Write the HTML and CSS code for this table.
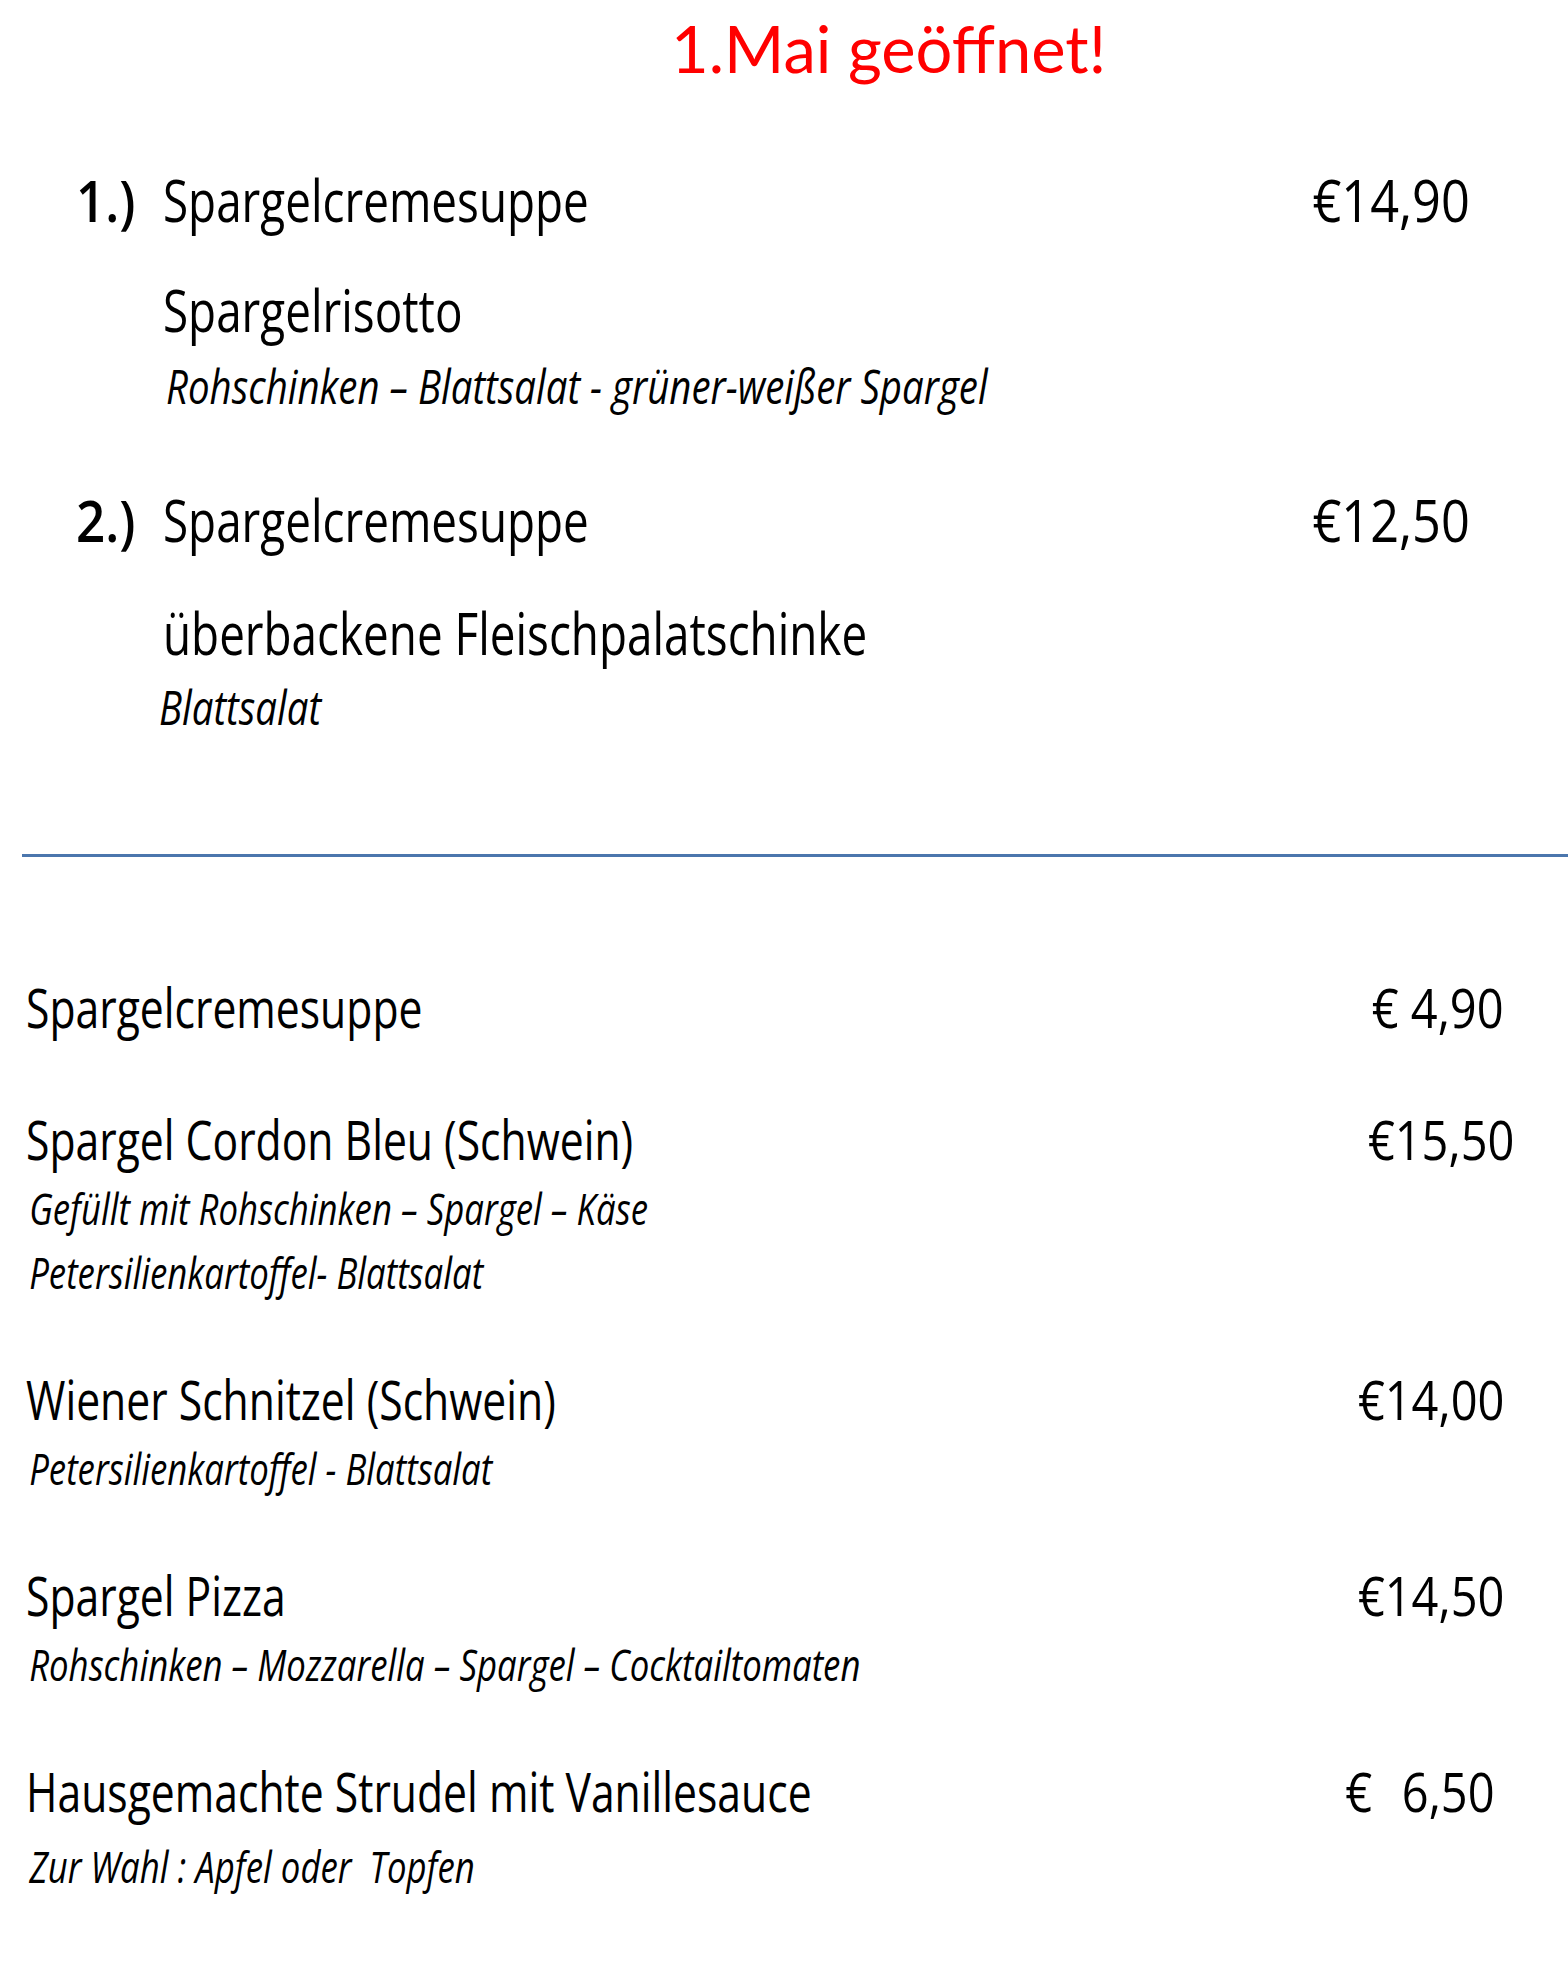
FILE: index.html
```html
<!DOCTYPE html>
<html lang="de">
<head>
    <meta charset="UTF-8">
    <meta name="viewport" content="width=device-width, initial-scale=1.0">
    <title>Spargelmenü</title>
    <link rel="stylesheet" href="styles.css">
</head>
<body>
    <div class="page">
        <h1 class="headline">1.Mai geöffnet!</h1>

        <section class="specials">
            <div class="combo">
                <div class="combo-row">
                    <span class="num">1.)</span>
                    <span class="name">Spargelcremesuppe</span>
                    <span class="price">€14,90</span>
                </div>
                <div class="sub">Spargelrisotto</div>
                <div class="sub-desc">Rohschinken – Blattsalat - grüner-weißer Spargel</div>
            </div>

            <div class="combo">
                <div class="combo-row">
                    <span class="num">2.)</span>
                    <span class="name">Spargelcremesuppe</span>
                    <span class="price">€12,50</span>
                </div>
                <div class="sub sub-wide">überbackene Fleischpalatschinke</div>
                <div class="sub-desc sub-desc-tight">Blattsalat</div>
            </div>
        </section>

        <hr class="divider">

        <section class="menu">
            <div class="dish">
                <div class="dish-row">
                    <span class="dish-name">Spargelcremesuppe</span>
                    <span class="dish-price">€ 4,90</span>
                </div>
            </div>

            <div class="dish">
                <div class="dish-row">
                    <span class="dish-name">Spargel Cordon Bleu (Schwein)</span>
                    <span class="dish-price price-out">€15,50</span>
                </div>
                <div class="desc">Gefüllt mit Rohschinken – Spargel – Käse</div>
                <div class="desc">Petersilienkartoffel- Blattsalat</div>
            </div>

            <div class="dish">
                <div class="dish-row">
                    <span class="dish-name">Wiener Schnitzel (Schwein)</span>
                    <span class="dish-price">€14,00</span>
                </div>
                <div class="desc">Petersilienkartoffel - Blattsalat</div>
            </div>

            <div class="dish">
                <div class="dish-row">
                    <span class="dish-name">Spargel Pizza</span>
                    <span class="dish-price">€14,50</span>
                </div>
                <div class="desc">Rohschinken – Mozzarella – Spargel – Cocktailtomaten</div>
            </div>

            <div class="dish">
                <div class="dish-row">
                    <span class="dish-name">Hausgemachte Strudel mit Vanillesauce</span>
                    <span class="dish-price price-in">€&nbsp;&nbsp;6,50</span>
                </div>
                <div class="desc desc-spaced">Zur Wahl : Apfel oder&nbsp; Topfen</div>
            </div>
        </section>
    </div>
</body>
</html>
```
FILE: styles.css
```css
* {
    margin: 0;
    padding: 0;
    box-sizing: border-box;
}
body {
    background: #ffffff;
    color: #000000;
    font-family: "Open Sans", "Noto Sans", sans-serif;
    font-weight: 400;
}
.page {
    width: 1568px;
    padding-top: 8px;
}

/* red note on top */
.headline {
    font-family: "Lato", "Open Sans", sans-serif;
    font-weight: 400;
    font-size: 65px;
    line-height: 80px;
    color: #ff0000;
    padding-left: 671px;
}

/* the text on the card is narrow, so every line gets squeezed */
.num,
.name,
.sub,
.sub-desc,
.dish-name,
.desc {
    white-space: nowrap;
    transform-origin: left center;
}
.price,
.dish-price {
    white-space: pre;
    transform-origin: right center;
    transform: scaleX(0.87);
}

/* numbered asparagus menus */
.specials {
    padding-left: 76px;
    padding-right: 98px;
}
.combo {
    margin-top: 72px;
}
.combo + .combo {
    margin-top: 64px;
}
.combo-row {
    display: grid;
    grid-template-columns: 87px 1fr auto;
    align-items: baseline;
    font-size: 58px;
    line-height: 80px;
}
.num {
    font-weight: 600;
    transform: scaleX(0.88);
}
.name {
    transform: scaleX(0.79);
}
.sub {
    margin-top: 30px;
    margin-left: 87px;
    font-size: 58px;
    line-height: 80px;
    transform: scaleX(0.79);
}
.sub-wide {
    margin-top: 33px;
}
.sub-desc {
    margin-top: 6px;
    margin-left: 90px;
    font-size: 48px;
    line-height: 60px;
    font-style: italic;
    transform: scaleX(0.80);
}
.sub-desc-tight {
    margin-top: 4px;
    margin-left: 83px;
}

.divider {
    border: none;
    height: 3px;
    background: #4b76ad;
    margin-top: 117px;
    margin-left: 22px;
}

/* regular dishes */
.menu {
    padding-top: 113px;
    padding-left: 26px;
    padding-right: 64px;
}
.dish + .dish {
    margin-top: 58px;
}
.dish-row {
    display: flex;
    justify-content: space-between;
    align-items: baseline;
    font-size: 54px;
    line-height: 74px;
}
.dish-name {
    display: inline-block;
    transform: scaleX(0.79);
}
.dish-price {
    display: inline-block;
}
.price-out {
    margin-right: -10px;
}
.price-in {
    margin-right: 9px;
    word-spacing: 3px;
}
.desc {
    padding-left: 4px;
    font-size: 44px;
    line-height: 64px;
    font-style: italic;
    transform: scaleX(0.79);
}
.desc-spaced {
    margin-top: 6px;
}
```
